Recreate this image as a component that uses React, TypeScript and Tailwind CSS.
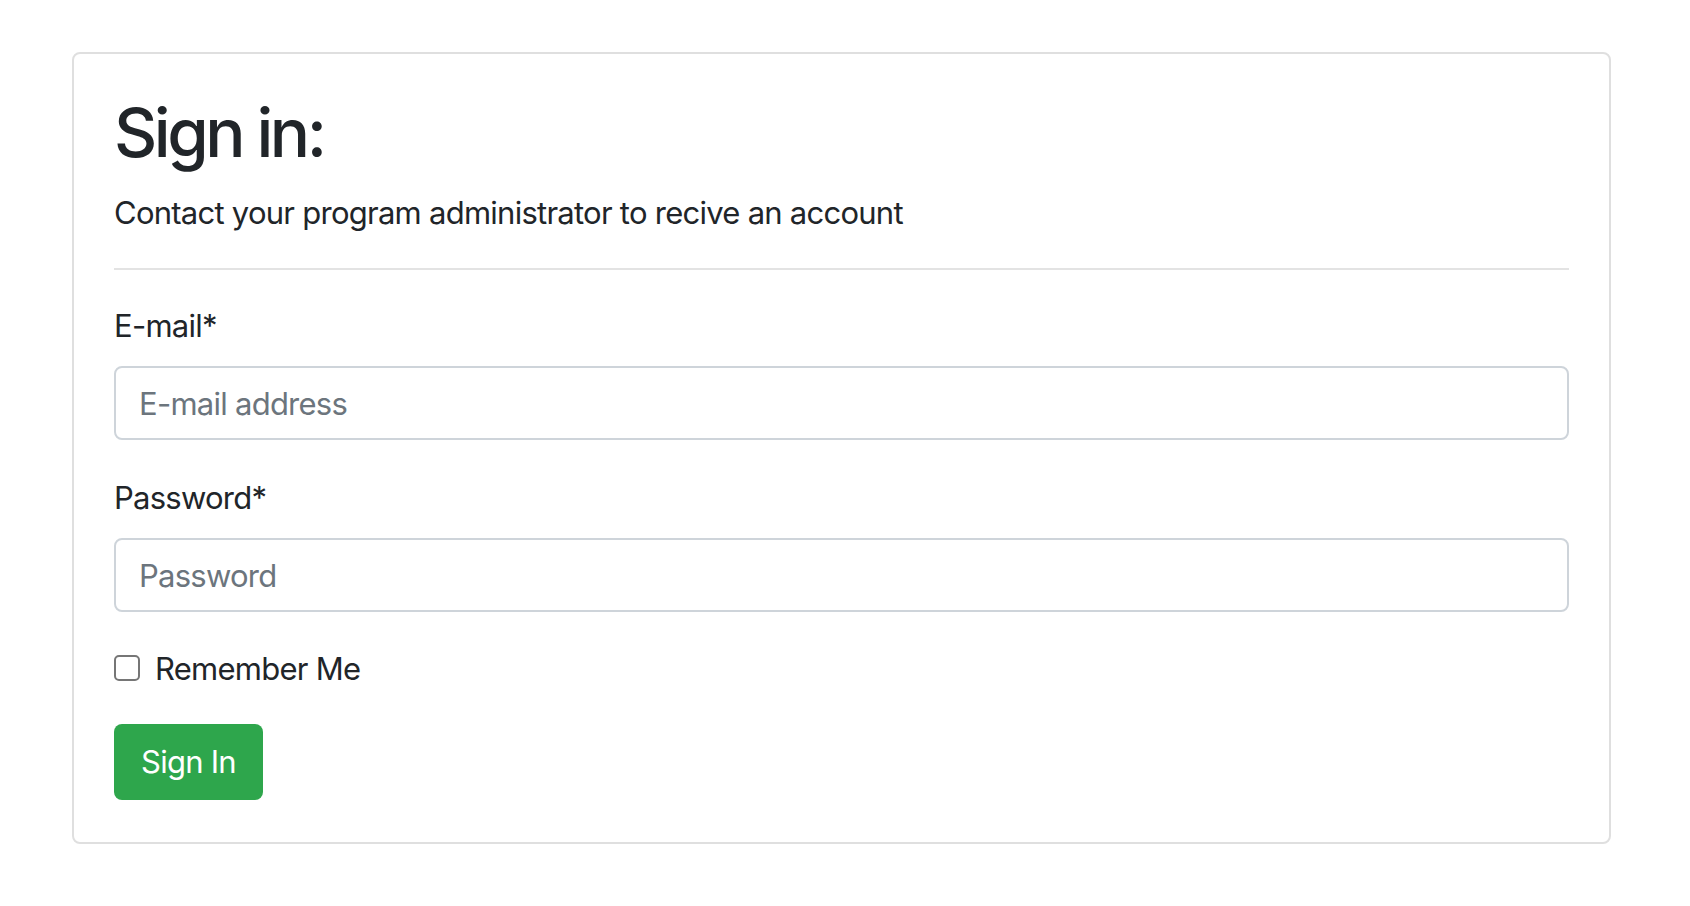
export default function App() {
  return (
    <div className="min-h-screen bg-white pt-[52px] pl-[72px] pr-[79px] font-['Inter','Liberation_Sans',sans-serif] text-[#212529]">
      {/* Card */}
      <div className="border-2 border-[#dfdfdf] rounded-[8px] px-[40px] pt-[38px] pb-[42px]">
        <h1 className="text-[67px] leading-[82px] font-medium tracking-[-0.052em] mb-[15px]">Sign in:</h1>
        <p className="text-[31px] leading-[48px] tracking-[-0.024em]">Contact your program administrator to recive an account</p>
        <hr className="mt-[31px] mb-[32px] border-0 border-t-2 border-[#e3e3e3]" />

        <form className="flex flex-col text-[31px] leading-[48px] tracking-[-0.024em]">
          <label className="mb-[16px]">E-mail*</label>
          <input
            type="email"
            placeholder="E-mail address"
            className="h-[74px] w-full border-2 border-[#ced4da] rounded-[8px] px-[23px] placeholder:text-[#6c757d] outline-none"
          />

          <label className="mt-[34px] mb-[16px]">Password*</label>
          <input
            type="password"
            placeholder="Password"
            className="h-[74px] w-full border-2 border-[#ced4da] rounded-[8px] px-[23px] placeholder:text-[#6c757d] outline-none"
          />

          <label className="flex items-center mt-[33px]">
            <span className="w-[26px] h-[26px] border-2 border-[#767676] rounded-[5px] bg-white mr-[15px] -mt-[2px]" />
            Remember Me
          </label>

          <div className="mt-[31px]">
            <button
              type="button"
              className="h-[76px] px-[27px] rounded-[8px] bg-[#2ea64c] text-white"
            >
              Sign In
            </button>
          </div>
        </form>
      </div>
    </div>
  );
}
